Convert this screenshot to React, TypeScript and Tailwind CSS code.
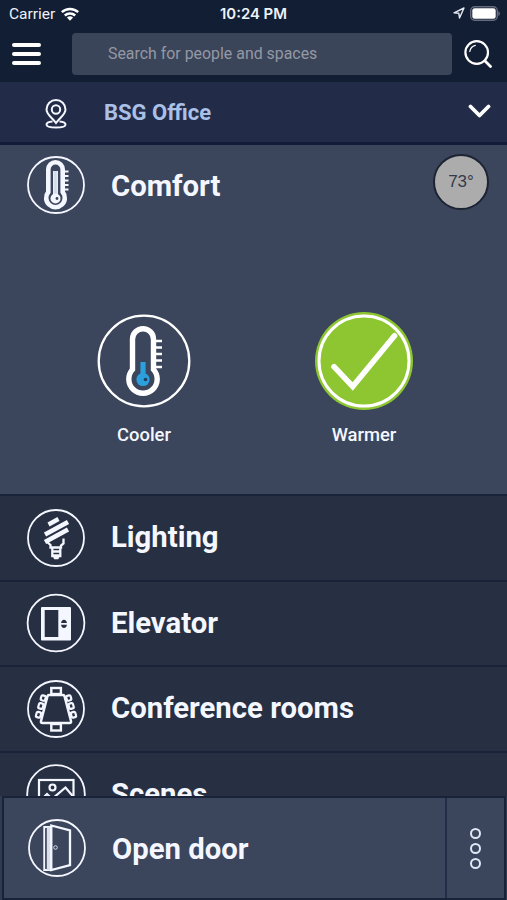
import React from 'react';

interface Row {
  name: string;
  icon: React.ReactNode;
}

// Every round icon is drawn on a 60x60 canvas
function RoundIcon({ children, radius = 28 }: { children: React.ReactNode; radius?: number }) {
  return (
    <svg
      className="w-[60px] h-[60px] shrink-0"
      viewBox="0 0 60 60"
      fill="none"
      stroke="#f4f7ff"
      strokeWidth="1.8"
    >
      <circle cx="30" cy="30" r={radius} />
      {children}
    </svg>
  );
}

function ComfortIcon() {
  return (
    <RoundIcon>
      <path d="M22.3 37V14.500a7.200 7.200 0 0 1 14.400 0V37a9.300 9.300 0 1 1-14.400 0z" strokeWidth="4.600" />
      <path d="M29.500 16v27" strokeWidth="4.600" stroke="#d3d9e8" />
      <path d="M27.700 16v24M31.300 16v24" strokeWidth="1" />
      <circle cx="29.500" cy="43.500" r="5" fill="#f4f7ff" stroke="none" />
      <circle cx="31" cy="43.500" r="1.400" fill="#3b455c" stroke="none" />
      <path d="M38 16.500h4.500M38 21h4.500M38 25.500h4.500M38 30h4.500M38 34.500h4.500" strokeWidth="1.800" />
    </RoundIcon>
  );
}

function LightingIcon() {
  return (
    <RoundIcon>
      <path d="M22.500 16.500L32.500 11" strokeWidth="4.300" />
      <path d="M19 26.500L42 14" strokeWidth="4.600" />
      <path d="M19 34L42 21.500" strokeWidth="4.600" />
      <path d="M20.500 33.500L24.500 37V39.500H35V37.500L37.500 35.500V30.500" strokeWidth="2.300" />
      <path d="M26.300 39v9h8V39M26 43.500h8.500M26 47.500h8.500" strokeWidth="2.300" />
      <path d="M27 48.500h6.500l-1.200 2.800h-4.100z" fill="#f4f7ff" stroke="none" />
    </RoundIcon>
  );
}

function ElevatorIcon() {
  return (
    <RoundIcon radius={28.4}>
      <rect x="15" y="14" width="30" height="33.500" rx="1" fill="#f4f7ff" stroke="none" />
      <rect x="18.700" y="17" width="13.600" height="27" fill="#272f42" stroke="none" />
      <path d="M35 30q.8-3.300 3-3.300t3 3.300zM35 31.800q.8 3.300 3 3.300t3-3.300z" fill="#272f42" stroke="none" />
    </RoundIcon>
  );
}

function ConferenceIcon() {
  return (
    <RoundIcon>
      <path d="M23 16h14q1.200 0 1.600 1.500L45 42q.5 2-1.500 2h-27q-2 0-1.500-2l6.400-24.500Q21.800 16 23 16z" strokeWidth="2.500" />
      <rect x="25.300" y="9" width="9.600" height="6" strokeWidth="2.400" />
      <rect x="25.300" y="45" width="9.600" height="6.500" strokeWidth="2.400" />
      <g strokeWidth="2.200">
        <rect x="15" y="16.500" width="4.500" height="5" rx="1.300" transform="rotate(15 17 19)" />
        <rect x="12.600" y="24.300" width="4.500" height="5.500" rx="1.300" transform="rotate(15 15 27)" />
        <rect x="10.200" y="33" width="4.500" height="5.500" rx="1.300" transform="rotate(15 12.500 36)" />
        <rect x="40.500" y="16.500" width="4.500" height="5" rx="1.300" transform="rotate(-15 43 19)" />
        <rect x="42.900" y="24.300" width="4.500" height="5.500" rx="1.300" transform="rotate(-15 45 27)" />
        <rect x="45.300" y="33" width="4.500" height="5.500" rx="1.300" transform="rotate(-15 47.500 36)" />
      </g>
    </RoundIcon>
  );
}

function ScenesIcon() {
  return (
    <RoundIcon radius={28.8}>
      <rect x="13" y="16" width="34.500" height="28" strokeWidth="2.200" />
      <circle cx="26.500" cy="23.500" r="3" strokeWidth="2.200" />
      <path d="M17 34l4-4 5 5 13.500-11.500 8 9.500" strokeWidth="2.200" />
    </RoundIcon>
  );
}

function DoorIcon() {
  return (
    <RoundIcon>
      <path d="M17.200 9h6v43h-6z" strokeWidth="1.800" />
      <path d="M21.500 9v43" stroke="#d9dfeb" strokeWidth="3.400" />
      <path d="M24.300 7.500L43 12.500V47L24.300 52z" strokeWidth="2.300" />
      <circle cx="28.500" cy="29.500" r="1.800" strokeWidth=".8" />
    </RoundIcon>
  );
}

const rows: Row[] = [
  { name: 'Lighting', icon: <LightingIcon /> },
  { name: 'Elevator', icon: <ElevatorIcon /> },
  { name: 'Conference rooms', icon: <ConferenceIcon /> },
  { name: 'Scenes', icon: <ScenesIcon /> },
];

function StatusBar() {
  return (
    <div className="grid grid-cols-3 items-center h-7 pl-[9px] pr-[7px] text-[#eef2fa]">
      <div className="flex items-center gap-[6px] text-[15.5px]">
        <span className="mt-[2px]">Carrier</span>
        <svg className="w-[18px] h-[14px]" viewBox="0 0 18 14" fill="none" stroke="#fff" strokeWidth="2.500">
          <path d="M.8 5.200a11.800 11.800 0 0 1 16.400 0" />
          <path d="M3.800 8.500a7.500 7.500 0 0 1 10.400 0" />
          <path d="M9 13.800L5.900 10.600a4.500 4.500 0 0 1 6.200 0z" fill="#fff" stroke="none" />
        </svg>
      </div>
      <div className="pr-[2px] text-center text-[14.9px] font-semibold whitespace-nowrap font-['Inter',sans-serif]">10:24 PM</div>
      <div className="flex items-center justify-end gap-[5px] mb-[2px]">
        <svg className="w-3 h-3" viewBox="0 0 12 12" fill="none" stroke="#e6eaf2" strokeWidth="1.400" strokeLinejoin="round">
          <path d="M1 5.800L11 1 6.500 11 5.800 6.200z" />
        </svg>
        <svg className="w-[30px] h-[15px]" viewBox="0 0 30 15">
          <rect x=".7" y=".7" width="26.600" height="13.600" rx="4" fill="none" stroke="#666c7d" strokeWidth="1.400" />
          <rect x="2.300" y="2.300" width="23.400" height="10.400" rx="2.300" fill="#fff" />
          <path d="M28.300 5q1.700 1 1.700 2.500t-1.700 2.500z" fill="#666c7d" />
        </svg>
      </div>
    </div>
  );
}

export default function App() {
  return (
    <div className="flex flex-col w-[507px] h-[900px] overflow-hidden bg-[#272f42] text-[#f4f7ff] font-['Roboto',sans-serif]">
      <header className="h-[82px] shrink-0 bg-[#121e33]">
        <StatusBar />
        <div className="flex items-center pt-[5px] pl-3 pr-[14px]">
          <button className="flex flex-col gap-[5px] w-[29px]">
            <span className="h-1 rounded-sm bg-white" />
            <span className="h-1 rounded-sm bg-white" />
            <span className="h-1 rounded-sm bg-white" />
          </button>
          <div className="flex items-center w-[380px] h-[42px] ml-[31px] pl-9 rounded bg-[#3b455a] text-[15.9px] text-[#9498a3]">
            Search for people and spaces
          </div>
          <svg className="w-7 h-7 ml-3" viewBox="0 0 28 28" fill="none" stroke="#fff" strokeLinecap="round">
            <circle cx="12.700" cy="12.500" r="11.300" strokeWidth="2.200" />
            <path d="M20.800 20.800L26.500 26.500" strokeWidth="2.800" />
            <path d="M5.800 11.500a7.500 7.500 0 0 1 5.500-6.200" strokeWidth="1.200" />
          </svg>
        </div>
      </header>

      <div className="flex items-center h-[63px] shrink-0 pl-[45px] pr-[16px] bg-[#222b47] border-b-[3px] border-[#121c38]">
        <svg className="w-[22px] h-[30px] mt-[3px]" viewBox="0 0 22 30" fill="none" stroke="#f4f7ff" strokeWidth="2">
          <path d="M11 24C7 18.500 1.500 15.500 1.500 10.500a9.500 9.500 0 0 1 19 0C20.500 15.500 15 18.500 11 24z" />
          <circle cx="11" cy="10.500" r="4.200" />
          <path d="M7.500 22.600c-3.500.3-6 1.400-6 2.900 0 1.900 4 3 9.500 3s9.500-1.100 9.500-3c0-1.500-2.500-2.600-6-2.900" />
        </svg>
        <span className="flex-1 ml-[37px] text-[22px] font-bold text-[#a9c0e8]">BSG Office</span>
        <svg className="w-6 h-4 mb-[2px]" viewBox="0 0 24 16" fill="none" stroke="#fff" strokeWidth="3.800" strokeLinecap="round" strokeLinejoin="round">
          <path d="M3.500 3.500L12.500 12.500L21.500 3.500" />
        </svg>
      </div>

      <main className="flex-1 min-h-0 overflow-hidden">
        <section className="h-[351px] bg-[#3b455c] border-b-2 border-[#182239]">
          <div className="flex items-center h-[80px] pl-[26px] pr-[18px]">
            <ComfortIcon />
            <h2 className="flex-1 mt-1 ml-[25px] text-[29.3px] font-bold">Comfort</h2>
            <div className="flex items-center justify-center w-14 h-14 mb-[6px] rounded-full border-2 border-[#1c2433] bg-[#acacac] text-[17px] text-[#343a4c] font-['Liberation_Sans',sans-serif]">
              73°
            </div>
          </div>
          <div className="flex mt-[86px] pl-[34px]">
            <div className="flex flex-col items-center w-[220px]">
              <svg className="w-[100px] h-[100px]" viewBox="0 0 100 100" fill="none" stroke="#fff">
                <circle cx="50" cy="50" r="45.300" strokeWidth="2.300" />
                <path d="M38.500 58.500V28.200a10.500 10.500 0 0 1 21 0V58.500a14.200 14.200 0 1 1-21 0z" strokeWidth="5.400" />
                <path d="M62 30h6M62 36.500h6M62 43h6M62 49.500h6M62 56h6" strokeWidth="2.700" />
                <path d="M49 51v16" stroke="#2c9fdd" strokeWidth="5.200" />
                <circle cx="49" cy="68.500" r="6.600" fill="#2c9fdd" stroke="none" />
                <circle cx="51.500" cy="68.500" r="1.800" fill="#263d5c" stroke="none" />
              </svg>
              <span className="mt-3 text-[18.4px] font-medium leading-6">Cooler</span>
            </div>
            <div className="flex flex-col items-center w-[220px]">
              <svg className="w-[100px] h-[100px]" viewBox="0 0 100 100" fill="none" stroke="#fff">
                <circle cx="50" cy="50" r="49" fill="#8dc630" stroke="none" />
                <circle cx="50" cy="50" r="45" strokeWidth="3" />
                <path d="M20 55.700L38.700 75.500L80.500 24.800" strokeWidth="5.600" strokeLinecap="round" />
              </svg>
              <span className="mt-3 text-[18.4px] font-medium leading-6">Warmer</span>
            </div>
          </div>
        </section>
        {rows.map((row) => (
          <div key={row.name} className="flex items-center h-[85.5px] pl-[26px] border-b-2 border-[#182239]">
            {row.icon}
            <h2 className="mt-px ml-[25px] text-[29.3px] font-bold">{row.name}</h2>
          </div>
        ))}
      </main>

      <footer className="h-[104px] shrink-0 pl-[2px] pr-px bg-[#303b52]">
        <div className="flex h-full border-2 border-[#182239] bg-[#3b455c]">
          <div className="flex flex-1 items-center pl-[23px] border-r-2 border-[#232e48]">
            <DoorIcon />
            <h2 className="mt-1 ml-[25px] text-[29.3px] font-bold">Open door</h2>
          </div>
          <button className="flex flex-col items-center justify-center gap-1 w-[57px]">
            <span className="w-[11px] h-[11px] rounded-full border-2 border-[#dfe6f5]" />
            <span className="w-[11px] h-[11px] rounded-full border-2 border-[#dfe6f5]" />
            <span className="w-[11px] h-[11px] rounded-full border-2 border-[#dfe6f5]" />
          </button>
        </div>
      </footer>
    </div>
  );
}
